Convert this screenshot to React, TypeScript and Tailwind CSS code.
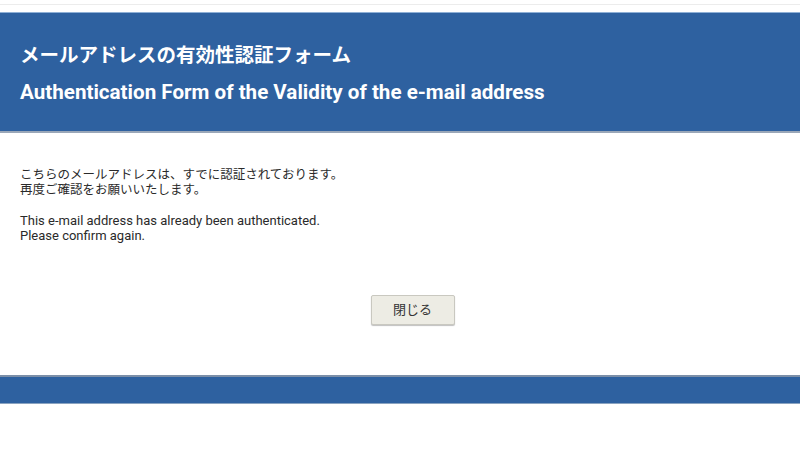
export default function App() {
  const font = { fontFamily: 'Roboto, "Noto Sans CJK JP", sans-serif' };
  return (
    <div className="w-[800px] h-[450px] bg-white overflow-hidden" style={font}>
      <div className="h-[5px] border-b border-[#ececec]" />
      <div className="h-[7px]" />
      <div className="bg-[#2e61a0] border-t border-[#8fb0d6] border-b-2 border-b-[#9aa7b8] h-[121px] px-5 pt-[30px] text-white font-bold">
        <h1 className="text-[19.5px] leading-[26px]">メールアドレスの有効性認証フォーム</h1>
        <h2 className="text-[20.6px] leading-[26px] mt-[10px]">Authentication Form of the Validity of the e-mail address</h2>
      </div>
      <div className="px-5 pt-[34px] leading-[15px] text-[#2a2a2a]">
        <p className="text-[12.5px]">こちらのメールアドレスは、すでに認証されております。</p>
        <p className="text-[12.5px]">再度ご確認をお願いいたします。</p>
        <p className="mt-[16px] text-[13px]">This e-mail address has already been authenticated.</p>
        <p className="text-[13px]">Please confirm again.</p>
      </div>
      <div className="flex justify-center pl-[25px] mt-[52px]">
        <button className="w-[84px] h-[30px] bg-[#edece4] border border-[#c9c8c0] rounded-[2px] shadow-[0_1px_1px_rgba(0,0,0,0.25)] text-[13px] text-[#333]">
          閉じる
        </button>
      </div>
      <div className="mt-[50px] bg-[#2e61a0] border-t-2 border-[#7c8fa8] border-b border-b-[#8aa3c0] h-[29px]" />
    </div>
  );
}
